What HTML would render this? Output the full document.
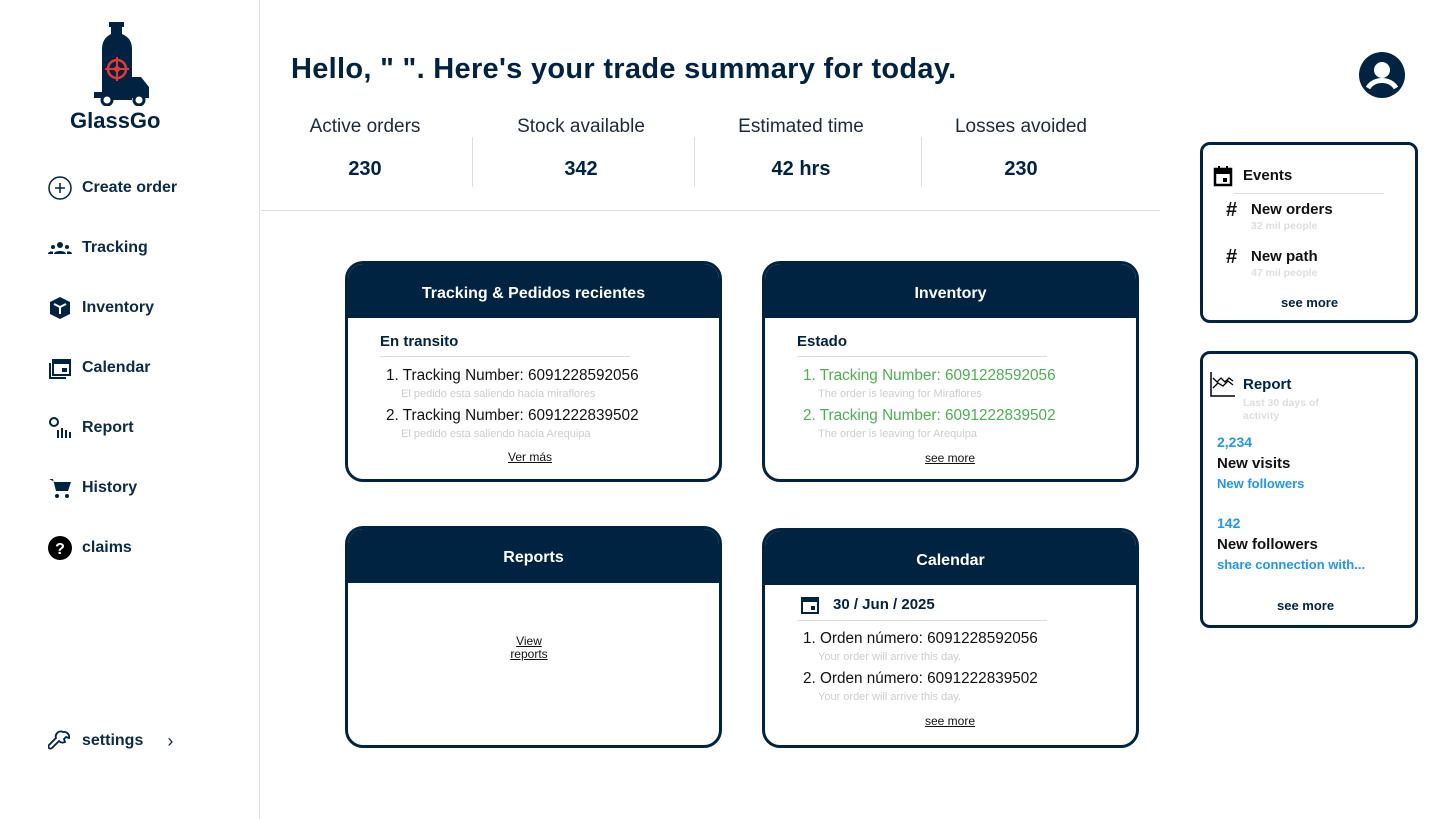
<!DOCTYPE html><html><head><meta charset="utf-8"><style>
*{margin:0;padding:0;box-sizing:border-box}
body{width:1440px;height:819px;background:#fff;font-family:"Liberation Sans",sans-serif;color:#002342;position:relative;overflow:hidden}
.a{position:absolute}
.side{left:0;top:0;width:260px;height:819px;border-right:1px solid #e2e2e2}
.nav{left:48px;font-size:16px;font-weight:bold;color:#0b2a45;display:flex;align-items:center;gap:10px}
.nav svg{width:24px;height:24px}
.stat{text-align:center;width:200px}
.stat .l{font-size:19px;color:#1a2a3a}
.stat .v{font-size:20px;font-weight:bold;margin-top:20px}
.vl{width:1px;height:50px;background:#ddd;top:137px}
.card{border:3px solid #002342;border-radius:18px;overflow:hidden;background:#fff}
.card .h{background:#002342;color:#fff;font-weight:bold;font-size:16px;text-align:center;height:54px;line-height:60px}
.sub{font-size:15px;font-weight:bold;color:#002342}
.li{font-size:15.3px;color:#111}
.sm{font-size:11px;color:#ccc}
.more{font-size:12px;text-decoration:underline;color:#111;text-align:center}
.panel{border:3px solid #002342;border-radius:10px}
</style></head><body>
<div class="a side"></div>
<svg class="a" style="left:93px;top:22px" width="60" height="84" viewBox="0 0 60 84">
<rect x="16" y="0" width="15" height="5" fill="#002342"/><path d="M18 5h11v7c7 3 10 8 10 15v51H9V27c0-7 3-12 9-15z" fill="#002342"/>
<path d="M39 55h9l8 10v11H39z" fill="#002342"/><rect x="1" y="70" width="55" height="6" fill="#002342"/>
<circle cx="14" cy="78" r="5" fill="#fff" stroke="#002342" stroke-width="3"/><circle cx="46" cy="78" r="5" fill="#fff" stroke="#002342" stroke-width="3"/>
<circle cx="24" cy="47" r="9" fill="none" stroke="#e53935" stroke-width="2.5"/><circle cx="24" cy="47" r="3" fill="#e53935"/><path d="M24 35v24M12 47h24" stroke="#e53935" stroke-width="2"/></svg>
<div class="a" style="left:70px;top:108px;font-size:22px;font-weight:bold;color:#002342">GlassGo</div>
<div class="a nav" style="top:176px"><svg viewBox="0 0 24 24"><circle cx="12" cy="12" r="11" fill="none" stroke="#002342" stroke-width="1.5"/><path d="M12 7v10M7 12h10" stroke="#002342" stroke-width="1.5"/></svg>Create order</div>
<div class="a nav" style="top:236px"><svg viewBox="0 0 24 24"><circle cx="12" cy="9" r="3" fill="#002342"/><circle cx="5" cy="11" r="2" fill="#002342"/><circle cx="19" cy="11" r="2" fill="#002342"/><path d="M6 18c0-4 12-4 12 0zM0 18c0-3 5-3 5-2v2zM24 18c0-3-5-3-5-2v2z" fill="#002342"/></svg>Tracking</div>
<div class="a nav" style="top:296px"><svg viewBox="0 0 24 24"><path d="M12 1l10 5v12l-10 5-10-5V6z" fill="#002342"/><path d="M6 8l6 3 6-3M12 11v7" stroke="#fff" stroke-width="2" fill="none"/></svg>Inventory</div>
<div class="a nav" style="top:356px"><svg viewBox="0 0 24 24"><rect x="5" y="4" width="17" height="15" fill="none" stroke="#002342" stroke-width="2"/><path d="M2 7v15h16" fill="none" stroke="#002342" stroke-width="2"/><rect x="5" y="4" width="17" height="4" fill="#002342"/><rect x="14" y="12" width="5" height="4" fill="#002342"/></svg>Calendar</div>
<div class="a nav" style="top:416px"><svg viewBox="0 0 24 24"><circle cx="6" cy="6" r="4" fill="none" stroke="#002342" stroke-width="2"/><path d="M10 14v8M14 12v10M18 14v8M22 16v6" stroke="#002342" stroke-width="2"/></svg>Report</div>
<div class="a nav" style="top:476px"><svg viewBox="0 0 24 24"><path d="M1 3h4l3 12h12l3-9H7" fill="#002342"/><circle cx="9" cy="20" r="2" fill="#002342"/><circle cx="19" cy="20" r="2" fill="#002342"/></svg>History</div>
<div class="a nav" style="top:536px"><svg viewBox="0 0 24 24"><circle cx="12" cy="12" r="12" fill="#000"/><text x="12" y="18" font-size="16" font-weight="bold" fill="#fff" text-anchor="middle" font-family="Liberation Sans">?</text></svg>claims</div>
<div class="a nav" style="top:729px"><svg viewBox="0 0 24 24"><path d="M15 3a5 5 0 016 6l-3-1-2 2 1 3a5 5 0 01-6-1L4 19a2 2 0 01-3-3l7-7a5 5 0 017-6z" fill="none" stroke="#002342" stroke-width="1.8"/></svg>settings<span style="margin-left:14px;font-weight:normal;font-size:18px">›</span></div>

<div class="a" style="left:291px;top:53px;font-size:29px;letter-spacing:0.3px;font-weight:bold;color:#002342">Hello, " ". Here's your trade summary for today.</div>
<svg class="a" style="left:1359px;top:52px" width="46" height="46" viewBox="0 0 46 46"><circle cx="23" cy="23" r="23" fill="#002342"/><circle cx="23" cy="18" r="8" fill="#fff"/><path d="M9 36c6-10 22-10 28 0" stroke="#fff" stroke-width="5" fill="none"/></svg>
<div class="a stat" style="left:265px;top:116px"><div class="l">Active orders</div><div class="v">230</div></div>
<div class="a stat" style="left:481px;top:116px"><div class="l">Stock available</div><div class="v">342</div></div>
<div class="a stat" style="left:701px;top:116px"><div class="l">Estimated time</div><div class="v">42 hrs</div></div>
<div class="a stat" style="left:921px;top:116px"><div class="l">Losses avoided</div><div class="v">230</div></div>
<div class="a vl" style="left:472px"></div><div class="a vl" style="left:694px"></div><div class="a vl" style="left:921px"></div>
<div class="a" style="left:261px;top:210px;width:899px;height:1px;background:#ddd"></div>

<div class="a card" style="left:345px;top:261px;width:377px;height:221px"><div class="h">Tracking &amp; Pedidos recientes</div></div>
<div class="a sub" style="left:380px;top:333px">En transito</div><div class="a" style="left:380px;top:356px;width:250px;height:1px;background:#ddd"></div>
<div class="a li" style="left:386px;top:367px">1. Tracking Number: 6091228592056</div><div class="a sm" style="left:401px;top:388px">El pedido esta saliendo hacia miraflores</div>
<div class="a li" style="left:386px;top:407px">2. Tracking Number: 6091222839502</div><div class="a sm" style="left:401px;top:428px">El pedido esta saliendo hacia Arequipa</div>
<div class="a more" style="left:508px;top:450px">Ver más</div>

<div class="a card" style="left:762px;top:261px;width:377px;height:221px"><div class="h">Inventory</div></div>
<div class="a sub" style="left:797px;top:333px">Estado</div><div class="a" style="left:797px;top:356px;width:250px;height:1px;background:#ddd"></div>
<div class="a li" style="left:803px;top:367px;color:#4caf50">1. Tracking Number: 6091228592056</div><div class="a sm" style="left:818px;top:388px">The order is leaving for Miraflores</div>
<div class="a li" style="left:803px;top:407px;color:#4caf50">2. Tracking Number: 6091222839502</div><div class="a sm" style="left:818px;top:428px">The order is leaving for Arequipa</div>
<div class="a more" style="left:925px;top:451px">see more</div>

<div class="a card" style="left:345px;top:526px;width:377px;height:222px"><div class="h" style="line-height:58px">Reports</div></div>
<div class="a more" style="left:503px;top:635px;width:52px;line-height:13px">View reports</div>

<div class="a card" style="left:762px;top:528px;width:377px;height:220px"><div class="h">Calendar</div></div>
<svg class="a" style="left:800px;top:595px" width="20" height="20" viewBox="0 0 20 20"><rect x="2" y="3" width="16" height="15" fill="none" stroke="#002342" stroke-width="2"/><rect x="2" y="3" width="16" height="4" fill="#002342"/><rect x="11" y="11" width="4" height="4" fill="#002342"/></svg>
<div class="a sub" style="left:833px;top:596px">30 / Jun / 2025</div><div class="a" style="left:797px;top:620px;width:250px;height:1px;background:#ddd"></div>
<div class="a li" style="left:803px;top:630px">1. Orden número: 6091228592056</div><div class="a sm" style="left:818px;top:651px">Your order will arrive this day.</div>
<div class="a li" style="left:803px;top:670px">2. Orden número: 6091222839502</div><div class="a sm" style="left:818px;top:691px">Your order will arrive this day.</div>
<div class="a more" style="left:925px;top:714px">see more</div>

<div class="a panel" style="left:1200px;top:142px;width:218px;height:181px"></div>
<svg class="a" style="left:1213px;top:165px" width="20" height="22" viewBox="0 0 20 22"><rect x="2" y="4" width="16" height="16" fill="none" stroke="#000" stroke-width="2.5"/><rect x="2" y="4" width="16" height="5" fill="#000"/><rect x="5" y="1" width="2" height="4" fill="#000"/><rect x="13" y="1" width="2" height="4" fill="#000"/><rect x="10" y="13" width="4" height="4" fill="#000"/></svg>
<div class="a" style="left:1243px;top:167px;font-size:15px;font-weight:bold;color:#111">Events</div>
<div class="a" style="left:1234px;top:193px;width:150px;height:1px;background:#ddd"></div>
<div class="a" style="left:1226px;top:199px;font-size:20px;font-weight:bold;color:#111">#</div><div class="a" style="left:1251px;top:201px;font-size:15px;font-weight:bold;color:#111">New orders</div><div class="a" style="left:1251px;top:220px;font-size:10.5px;color:#ddd;font-weight:bold">32 mil people</div>
<div class="a" style="left:1226px;top:246px;font-size:20px;font-weight:bold;color:#111">#</div><div class="a" style="left:1251px;top:248px;font-size:15px;font-weight:bold;color:#111">New path</div><div class="a" style="left:1251px;top:267px;font-size:10.5px;color:#ddd;font-weight:bold">47 mil people</div>
<div class="a" style="left:1281px;top:295px;font-size:13px;font-weight:bold">see more</div>

<div class="a panel" style="left:1200px;top:351px;width:218px;height:277px"></div>
<svg class="a" style="left:1210px;top:372px" width="25" height="25" viewBox="0 0 25 25"><path d="M1 0v24h24" stroke="#000" stroke-width="1.5" fill="none"/><path d="M3 6l4 4 4-4 4 4 4-4 4 3M3 16l5-5 5 3 5-5 5 4" stroke="#000" stroke-width="1.3" fill="none"/></svg>
<div class="a" style="left:1243px;top:376px;font-size:15px;font-weight:bold">Report</div>
<div class="a" style="left:1243px;top:397px;font-size:10.5px;color:#ddd;font-weight:bold;line-height:13px;width:100px">Last 30 days of activity</div>
<div class="a" style="left:1217px;top:434px;font-size:14px;font-weight:bold;color:#2196f3">2,234</div>
<div class="a" style="left:1217px;top:455px;font-size:15px;font-weight:bold;color:#111">New visits</div>
<div class="a" style="left:1217px;top:476px;font-size:13px;font-weight:bold;color:#2196f3">New followers</div>
<div class="a" style="left:1217px;top:515px;font-size:14px;font-weight:bold;color:#2196f3">142</div>
<div class="a" style="left:1217px;top:536px;font-size:15px;font-weight:bold;color:#111">New followers</div>
<div class="a" style="left:1217px;top:557px;font-size:13px;font-weight:bold;color:#2196f3">share connection with...</div>
<div class="a" style="left:1277px;top:598px;font-size:13px;font-weight:bold">see more</div>
</body></html>
